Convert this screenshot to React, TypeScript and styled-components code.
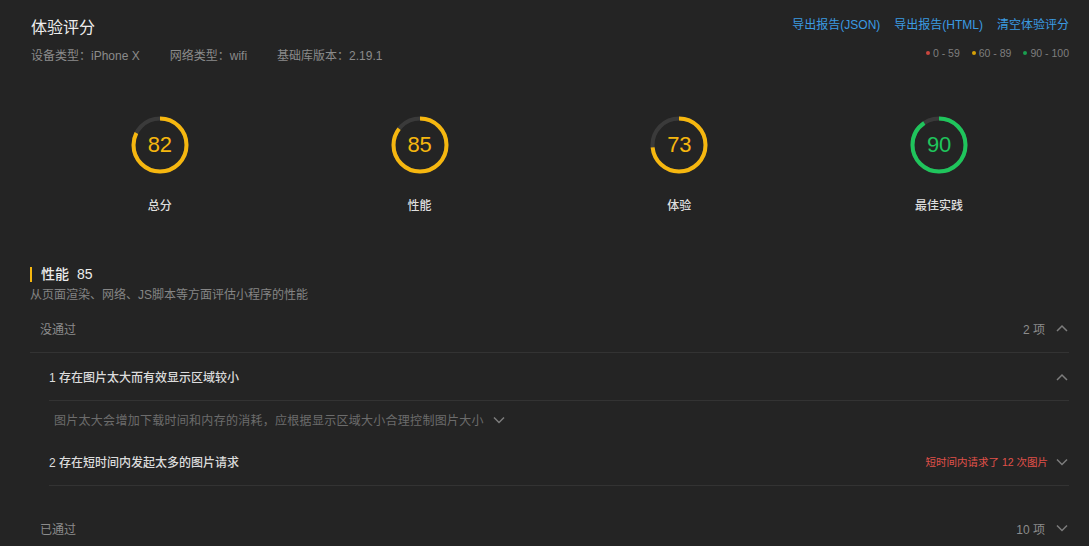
import React from 'react';
import styled, { createGlobalStyle } from 'styled-components';

const GlobalStyle = createGlobalStyle`
  html, body {
    margin: 0;
    padding: 0;
    background: #242424;
    overflow: hidden;
  }
  body {
    font-family: 'Liberation Sans', 'Noto Sans CJK SC', sans-serif;
  }
`;

interface IScore {
  label: string;
  value: number;
}

const scores: IScore[] = [
  { label: '总分', value: 82 },
  { label: '性能', value: 85 },
  { label: '体验', value: 73 },
  { label: '最佳实践', value: 90 },
];

const scoreColor = (v: number) => (v >= 90 ? '#1fc55c' : v >= 60 ? '#f6b70f' : '#d9473f');

const Chevron: React.FC<{ up?: boolean }> = ({ up }) => (
  <ChevronSvg width="12" height="8" viewBox="0 0 12 8">
    <polyline
      points={up ? '1,7 6,2 11,7' : '1,1.5 6,6.5 11,1.5'}
      fill="none"
      stroke="#7d7d7d"
      strokeWidth="1.5"
    />
  </ChevronSvg>
);

const Gauge: React.FC<{ score: IScore }> = ({ score }) => {
  const r = 26.5;
  const c = 2 * Math.PI * r;
  const color = scoreColor(score.value);
  return (
    <GaugeCol>
      <Ring>
        <svg width="60" height="60" viewBox="0 0 60 60">
          <circle cx="30" cy="30" r={r} fill="none" stroke="#3a3a3a" strokeWidth="4" />
          <circle
            cx="30"
            cy="30"
            r={r}
            fill="none"
            stroke={color}
            strokeWidth="4"
            strokeDasharray={`${(c * score.value) / 100} ${c}`}
            transform="rotate(-90 30 30)"
          />
        </svg>
        <RingValue color={color}>{score.value}</RingValue>
      </Ring>
      <GaugeLabel>{score.label}</GaugeLabel>
    </GaugeCol>
  );
};

const App: React.FC = () => {
  return (
    <Page>
      <GlobalStyle />
      <Header>
        <div>
          <Title>体验评分</Title>
          <InfoRow>
            <span>设备类型：iPhone X</span>
            <span>网络类型：wifi</span>
            <span>基础库版本：2.19.1</span>
          </InfoRow>
        </div>
        <HeaderRight>
          <Links>
            <LinkText>导出报告(JSON)</LinkText>
            <LinkText>导出报告(HTML)</LinkText>
            <LinkText>清空体验评分</LinkText>
          </Links>
          <Legend>
            <LegendItem><Dot color="#c9463e" />0 - 59</LegendItem>
            <LegendItem><Dot color="#d6a106" />60 - 89</LegendItem>
            <LegendItem><Dot color="#1a9e4f" />90 - 100</LegendItem>
          </Legend>
        </HeaderRight>
      </Header>

      <GaugeGrid>
        {scores.map((s) => (
          <Gauge key={s.label} score={s} />
        ))}
      </GaugeGrid>

      <SectionTitle>
        性能<SectionScore>85</SectionScore>
      </SectionTitle>
      <SectionDesc>从页面渲染、网络、JS脚本等方面评估小程序的性能</SectionDesc>

      <GroupRow bordered>
        <GroupLabel>没通过</GroupLabel>
        <RowRight>
          <Count>2 项</Count>
          <Chevron up />
        </RowRight>
      </GroupRow>

      <ItemList>
        <ItemRow>
          <ItemTitle>1 存在图片太大而有效显示区域较小</ItemTitle>
          <RowRight>
            <Chevron up />
          </RowRight>
        </ItemRow>
        <ItemDesc>
          图片太大会增加下载时间和内存的消耗，应根据显示区域大小合理控制图片大小
          <Chevron />
        </ItemDesc>
        <ItemRow>
          <ItemTitle>2 存在短时间内发起太多的图片请求</ItemTitle>
          <RowRight>
            <Warn>短时间内请求了 12 次图片</Warn>
            <Chevron />
          </RowRight>
        </ItemRow>
      </ItemList>

      <GroupRow>
        <GroupLabel>已通过</GroupLabel>
        <RowRight>
          <Count>10 项</Count>
          <Chevron />
        </RowRight>
      </GroupRow>
    </Page>
  );
};

const Page = styled.div`
  width: 1089px;
  box-sizing: border-box;
  padding: 16px 20px 0 30px;
  color: #e4e4e4;
`;

const Header = styled.div`
  display: flex;
  justify-content: space-between;
`;

const Title = styled.div`
  font-size: 16px;
  line-height: 24px;
  color: #ededed;
  padding-left: 1px;
`;

const InfoRow = styled.div`
  display: flex;
  gap: 30px;
  margin-top: 7px;
  font-size: 12px;
  line-height: 18px;
  color: #8b8b8b;
  padding-left: 1px;
`;

const HeaderRight = styled.div`
  display: flex;
  flex-direction: column;
  align-items: flex-end;
`;

const Links = styled.div`
  display: flex;
  gap: 14px;
`;

const LinkText = styled.span`
  font-size: 12px;
  line-height: 18px;
  color: #3b9be2;
  cursor: pointer;
`;

const Legend = styled.div`
  display: flex;
  gap: 12px;
  margin-top: 11px;
`;

const LegendItem = styled.span`
  display: flex;
  align-items: center;
  font-size: 10.5px;
  line-height: 16px;
  color: #7e7e7e;
`;

const Dot = styled.span<{ color: string }>`
  width: 4px;
  height: 4px;
  border-radius: 50%;
  background: ${({ color }) => color};
  margin-right: 3px;
`;

const GaugeGrid = styled.div`
  display: grid;
  grid-template-columns: repeat(4, 1fr);
  margin-top: 50px;
`;

const GaugeCol = styled.div`
  display: flex;
  flex-direction: column;
  align-items: center;
`;

const Ring = styled.div`
  position: relative;
  width: 60px;
  height: 60px;
`;

const RingValue = styled.div<{ color: string }>`
  position: absolute;
  inset: 0;
  display: flex;
  align-items: center;
  justify-content: center;
  font-size: 22px;
  color: ${({ color }) => color};
`;

const GaugeLabel = styled.div`
  margin-top: 22px;
  font-size: 12px;
  line-height: 18px;
  font-weight: 500;
  color: #dedede;
`;

const SectionTitle = styled.div`
  margin-top: 49px;
  display: flex;
  align-items: center;
  font-size: 14px;
  line-height: 20px;
  font-weight: 500;
  color: #ececec;
  &::before {
    content: '';
    width: 2px;
    height: 15px;
    background: #f6b70f;
    margin-right: 9px;
  }
`;

const SectionScore = styled.span`
  margin-left: 8px;
`;

const SectionDesc = styled.div`
  margin-top: 2px;
  font-size: 12px;
  line-height: 18px;
  color: #858585;
`;

const GroupRow = styled.div<{ bordered?: boolean }>`
  display: flex;
  align-items: center;
  justify-content: space-between;
  height: 48px;
  padding-left: 10px;
  border-bottom: 1px solid ${({ bordered }) => (bordered ? '#333333' : 'transparent')};
`;

const GroupLabel = styled.span`
  font-size: 12px;
  color: #8c8c8c;
`;

const RowRight = styled.div`
  display: flex;
  align-items: center;
  gap: 11px;
  padding-right: 1px;
`;

const Count = styled.span`
  font-size: 12px;
  color: #8c8c8c;
`;

const ItemList = styled.div`
  margin-left: 19px;
  margin-bottom: 18px;
`;

const ItemRow = styled.div`
  display: flex;
  align-items: center;
  justify-content: space-between;
  height: 47px;
  border-bottom: 1px solid #333333;
`;

const ItemTitle = styled.span`
  font-size: 12px;
  font-weight: 500;
  color: #dcdcdc;
`;

const ItemDesc = styled.div`
  display: flex;
  align-items: center;
  gap: 9px;
  height: 37px;
  padding-left: 5px;
  font-size: 12px;
  letter-spacing: 0.28px;
  color: #6c6c6c;
`;

const Warn = styled.span`
  font-size: 10.5px;
  color: #e0514a;
  margin-right: -3px;
`;

const ChevronSvg = styled.svg`
  display: block;
  flex-shrink: 0;
`;

export default App;
